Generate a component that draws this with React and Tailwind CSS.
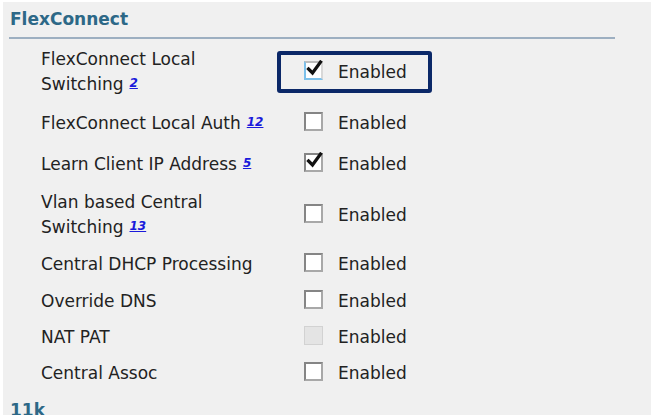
import React from "react";

function Sup({ n }) {
  return (
    <sup className="ml-[6px] text-[12px] font-bold italic text-[#1a1adb] underline relative top-[-3px]">
      {n}
    </sup>
  );
}

function Checkbox({ checked, disabled, focus }) {
  if (disabled) {
    return <div className="w-[19px] h-[19px] bg-[#e4e4e4] border border-[#d2d2d2] shrink-0 mb-[5px]" />;
  }
  return (
    <div
      className={
        "relative w-[19px] h-[19px] bg-white shrink-0 mb-[5px] border-2 " +
        (focus
          ? "border-t-[#bdbdbd] border-r-[#d8d8d8] border-l-[#7cc0ea] border-b-[#7cc0ea]"
          : "border-t-[#858585] border-l-[#858585] border-r-[#a8a8a8] border-b-[#a8a8a8]")
      }
    >
      {checked && (
        <svg className="absolute left-[0px] top-[-3px]" width="18" height="18" viewBox="0 0 18 18">
          <path d="M2.5 9 L6.5 13 L14.5 2" fill="none" stroke="#111" strokeWidth="3.2" strokeLinecap="square" strokeLinejoin="miter" />
        </svg>
      )}
    </div>
  );
}

function Row({ h, label, checked, disabled, focus }) {
  return (
    <div className="relative flex items-center" style={{ height: h }}>
      <div className="w-[263px] shrink-0 leading-[25px] mb-[2px]">{label}</div>
      <Checkbox checked={checked} disabled={disabled} focus={focus} />
      <div className="ml-[15px]">Enabled</div>
      {focus && (
        <div className="absolute left-[236px] top-[6px] w-[155px] h-[42px] border-[4px] border-[#0b2868] rounded-[3px]" />
      )}
    </div>
  );
}

export default function App() {
  return (
    <div
      className="min-h-screen bg-white pl-[3px] pt-[2px] text-[#222]"
      style={{ fontFamily: '"DejaVu Sans", Verdana, sans-serif' }}
    >
      <div className="w-[648px] h-[413px] bg-[#f0f0f0] overflow-hidden text-[17px]">
        <div className="pl-[7px] pt-[5px] h-[35px] font-bold text-[17px] text-[#2d6887]">FlexConnect</div>
        <div className="ml-[6px] h-[2px] w-[606px] bg-[#9dafc1]" />
        <div className="pl-[38px] pt-[6px]">
          <Row
            h={56}
            checked
            focus
            label={
              <>
                FlexConnect Local
                <br />
                Switching
                <Sup n="2" />
              </>
            }
          />
          <Row
            h={46}
            label={
              <>
                FlexConnect Local Auth
                <Sup n="12" />
              </>
            }
          />
          <Row
            h={36}
            checked
            label={
              <>
                Learn Client IP Address
                <Sup n="5" />
              </>
            }
          />
          <Row
            h={66}
            label={
              <>
                Vlan based Central
                <br />
                Switching
                <Sup n="13" />
              </>
            }
          />
          <Row h={32} label="Central DHCP Processing" />
          <Row h={42} label="Override DNS" />
          <Row h={30} disabled label="NAT PAT" />
          <Row h={42} label="Central Assoc" />
        </div>
        <div className="pl-[7px] pt-[3px] font-bold text-[17px] text-[#2d6887]">11k</div>
      </div>
    </div>
  );
}
